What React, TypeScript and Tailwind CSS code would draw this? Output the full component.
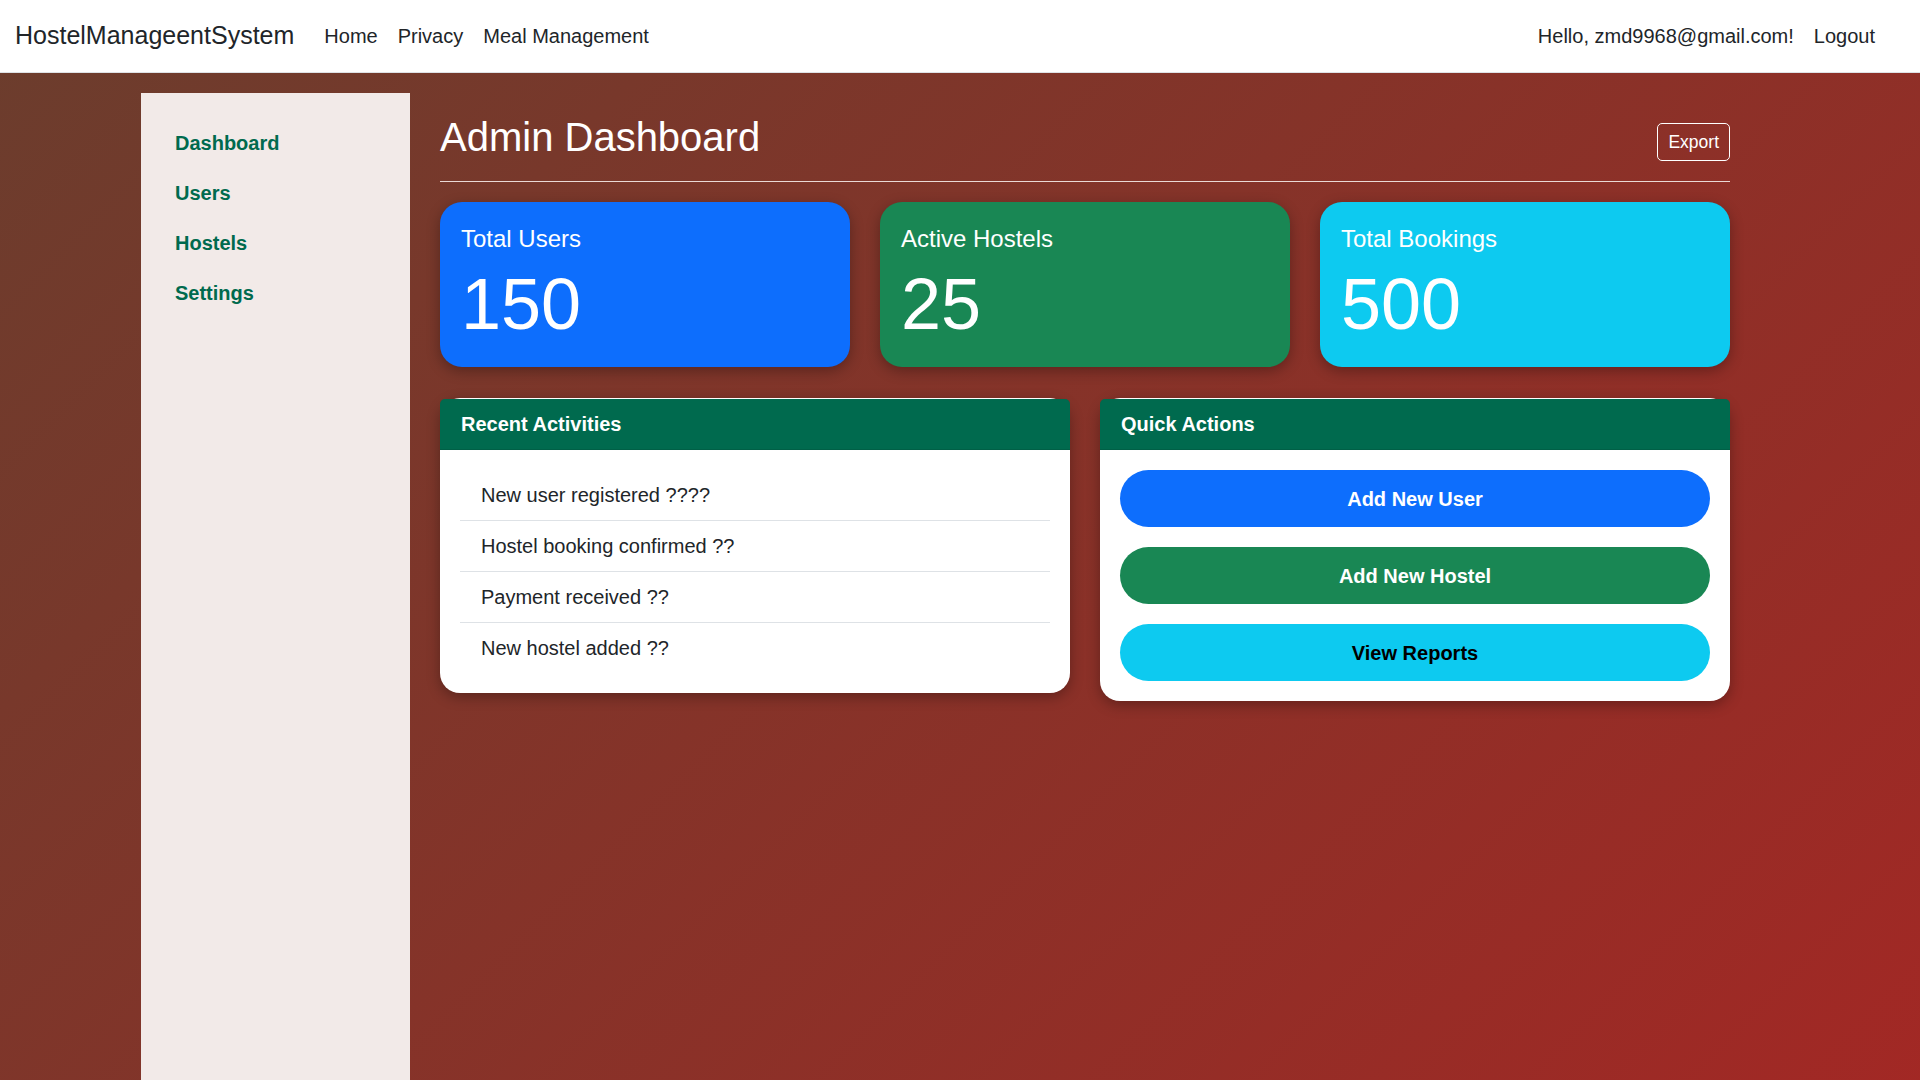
import React from "react";

const stats = [
  { title: "Total Users", value: "150", color: "bg-[#0d6efd]" },
  { title: "Active Hostels", value: "25", color: "bg-[#198754]" },
  { title: "Total Bookings", value: "500", color: "bg-[#0dcaf0]" },
];

const activities = [
  "New user registered ????",
  "Hostel booking confirmed ??",
  "Payment received ??",
  "New hostel added ??",
];

const App: React.FC = () => {
  return (
    <div className="min-h-screen font-['Liberation_Sans',Arial,sans-serif] text-[#212529] bg-[linear-gradient(135deg,#6b3d2d_0%,#b22222_100%)] bg-[length:100%_1957px] bg-no-repeat">
      {/* Navbar */}
      <nav className="h-[73px] bg-white border-b border-[#dee2e6] flex items-center justify-between pl-[15px] pr-[35px]">
        <div className="flex items-center">
          <span className="text-[25px] leading-[1.5] mr-[20px]">HostelManageentSystem</span>
          <a className="text-[20px] px-[10px]">Home</a>
          <a className="text-[20px] px-[10px]">Privacy</a>
          <a className="text-[20px] px-[10px]">Meal Management</a>
        </div>
        <div className="flex items-center">
          <span className="text-[20px] px-[10px]">Hello, zmd9968@gmail.com!</span>
          <a className="text-[20px] px-[10px]">Logout</a>
        </div>
      </nav>

      <div className="flex pl-[141px] pt-[20px] pb-[60px]">
        {/* Sidebar */}
        <aside className="w-[269px] min-h-[1150px] bg-[#f2eae8] pt-[25px] pl-[14px] shrink-0">
          {["Dashboard", "Users", "Hostels", "Settings"].map(item => (
            <a key={item} className="block px-[20px] py-[10px] text-[20px] leading-[30px] font-bold text-[#006a4e]">
              {item}
            </a>
          ))}
        </aside>

        {/* Main */}
        <main className="ml-[30px] w-[1290px]">
          <div className="flex items-center justify-between pt-[20px] pb-[10px] border-b border-[#ead9d5] mb-[20px]">
            <h1 className="text-[40px] leading-[1.2] mb-[10px] text-white">Admin Dashboard</h1>
            <button className="border border-white rounded-[5px] px-[10px] py-[5px] text-[17.5px] leading-[26px] text-white">
              Export
            </button>
          </div>

          {/* Stat cards */}
          <div className="grid grid-cols-3 gap-[30px] mb-[31px]">
            {stats.map(s => (
              <div
                key={s.title}
                className={`${s.color} rounded-[22px] pl-[21px] pr-[20px] pt-[23px] pb-[20px] text-white shadow-[0_4px_14px_rgba(0,0,0,0.3)]`}
              >
                <div className="text-[24px] leading-[1.2]">{s.title}</div>
                <div className="text-[72px] leading-[1.2] mt-[7px]">{s.value}</div>
              </div>
            ))}
          </div>

          {/* Bottom cards */}
          <div className="grid grid-cols-2 gap-[30px] items-start">
            <div className="bg-white rounded-[20px] shadow-[0_4px_14px_rgba(0,0,0,0.3)] pt-px">
              <div className="bg-[#006a4e] rounded-t-[5px] pl-[21px] pr-[20px] py-[10px] border-b border-black/10">
                <h5 className="text-[20px] leading-[30px] font-bold text-white">Recent Activities</h5>
              </div>
              <ul className="p-[20px]">
                {activities.map((a, i) => (
                  <li
                    key={a}
                    className={`pl-[21px] pr-[20px] py-[10px] text-[20px] leading-[30px] ${
                      i < activities.length - 1 ? "border-b border-[#dee2e6]" : ""
                    }`}
                  >
                    {a}
                  </li>
                ))}
              </ul>
            </div>

            <div className="bg-white rounded-[20px] shadow-[0_4px_14px_rgba(0,0,0,0.3)] pt-px">
              <div className="bg-[#006a4e] rounded-t-[5px] pl-[21px] pr-[20px] py-[10px] border-b border-black/10">
                <h5 className="text-[20px] leading-[30px] font-bold text-white">Quick Actions</h5>
              </div>
              <div className="p-[20px] flex flex-col gap-[20px]">
                <button className="h-[57px] rounded-full bg-[#0d6efd] text-white text-[20px] font-bold">
                  Add New User
                </button>
                <button className="h-[57px] rounded-full bg-[#198754] text-white text-[20px] font-bold">
                  Add New Hostel
                </button>
                <button className="h-[57px] rounded-full bg-[#0dcaf0] text-black text-[20px] font-bold">
                  View Reports
                </button>
              </div>
            </div>
          </div>
        </main>
      </div>
    </div>
  );
};

export default App;
